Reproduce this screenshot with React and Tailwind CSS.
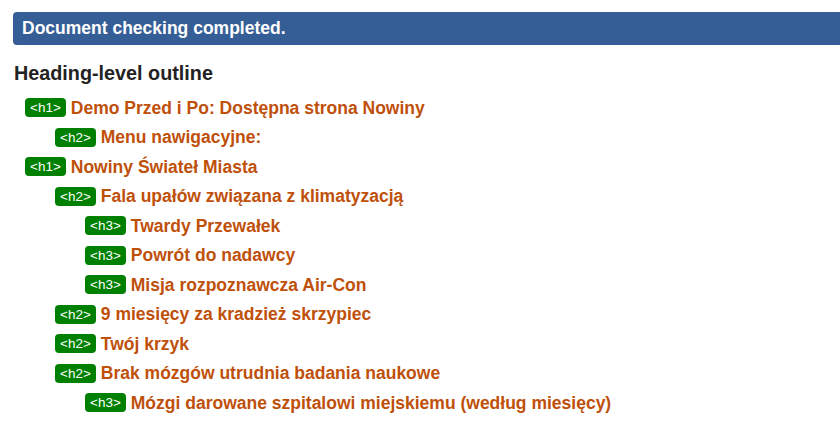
import React from "react";

const outline = [
  { level: 1, text: "Demo Przed i Po: Dostępna strona Nowiny" },
  { level: 2, text: "Menu nawigacyjne:" },
  { level: 1, text: "Nowiny Świateł Miasta" },
  { level: 2, text: "Fala upałów związana z klimatyzacją" },
  { level: 3, text: "Twardy Przewałek" },
  { level: 3, text: "Powrót do nadawcy" },
  { level: 3, text: "Misja rozpoznawcza Air-Con" },
  { level: 2, text: "9 miesięcy za kradzież skrzypiec" },
  { level: 2, text: "Twój krzyk" },
  { level: 2, text: "Brak mózgów utrudnia badania naukowe" },
  { level: 3, text: "Mózgi darowane szpitalowi miejskiemu (według miesięcy)" },
];

const indent = {
  1: "pl-[25px]",
  2: "pl-[55px]",
  3: "pl-[85px]",
};

const App = () => {
  return (
    <div className="w-[840px] h-[428px] bg-white overflow-hidden font-['Liberation_Sans',Arial,sans-serif]">
      <div className="ml-[13px] mt-[12px] h-[33px] rounded-l-[4px] bg-[#365e96] flex items-center pl-[9px]">
        <span className="text-white font-bold text-[17.5px]">
          Document checking completed.
        </span>
      </div>
      <h2 className="ml-[14px] mt-[16px] text-[19.8px] leading-[24px] font-bold text-[#222]">
        Heading-level outline
      </h2>
      <ul className="mt-[8px]">
        {outline.map((item, i) => (
          <li
            key={i}
            className={`h-[29.5px] flex items-center ${indent[item.level]}`}
          >
            <span className="h-[19px] px-[5px] rounded-[4px] bg-[#008000] text-white text-[13.5px] leading-[19px]">
              {`<h${item.level}>`}
            </span>
            <span className="ml-[5px] text-[17.5px] font-bold text-[#bf500a]">
              {item.text}
            </span>
          </li>
        ))}
      </ul>
    </div>
  );
};

export default App;
